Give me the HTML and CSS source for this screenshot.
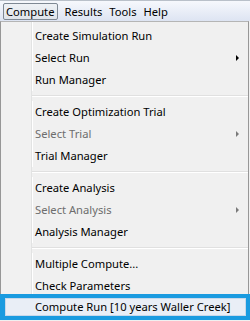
FILE: index.html
```html
<!DOCTYPE html>
<html>
<head>
    <title>Compute Menu</title>
    <link rel="stylesheet" href="styles.css">
</head>
<body>
    <div class="menubar">
        <span class="top-item open">Compute</span>
        <span class="top-item">Results</span>
        <span class="top-item">Tools</span>
        <span class="top-item">Help</span>
    </div>
    <div class="menu">
        <div class="item">Create Simulation Run</div>
        <div class="item sub">Select Run</div>
        <div class="item">Run Manager</div>
        <div class="sep"></div>
        <div class="item">Create Optimization Trial</div>
        <div class="item sub disabled">Select Trial</div>
        <div class="item">Trial Manager</div>
        <div class="sep"></div>
        <div class="item">Create Analysis</div>
        <div class="item sub disabled">Select Analysis</div>
        <div class="item">Analysis Manager</div>
        <div class="sep"></div>
        <div class="item">Multiple Compute...</div>
        <div class="item">Check Parameters</div>
        <div class="item framed"><span class="hover">Compute Run [10 years Waller Creek]</span></div>
    </div>
</body>
</html>
```

FILE: styles.css
```css
body {
    margin: 0;
    width: 250px;
    height: 321px;
    overflow: hidden;
    font-family: "Noto Sans", "Open Sans", sans-serif;
    font-size: 11.2px;
    color: #000;
    background: #f0f0f0;
}
.menubar {
    height: 20px;
    border-top: 1px solid #b9c0c9;
    background: linear-gradient(#f6f8fc, #dde4f2);
    display: flex;
    align-items: center;
    padding-left: 3px;
}
.top-item {
    padding: 0 2px 0 3px;
    line-height: 15px;
    border: 1px solid transparent;
}
.top-item.open {
    border-color: #7e8893;
    border-radius: 2px;
    background: linear-gradient(#eef1f5, #dfe4ea);
    padding: 0 3px 0 2px;
    margin-right: 2px;
}
.menu {
    border-left: 1px solid #979797;
    border-right: 1px solid #979797;
    border-top: 1px solid #b5b5b5;
    margin-right: 1px;
    padding-top: 3px;
    background: linear-gradient(to right, #f1f1f1 30px, #e2e3e3 30px, #e2e3e3 31px, #fff 31px, #fff 32px, #f0f0f0 32px);
}
.item {
    height: 22px;
    line-height: 22px;
    padding-left: 34px;
    position: relative;
}
.item.disabled {
    color: #6d6d6d;
}
.item.sub::after {
    content: "";
    position: absolute;
    right: 9px;
    top: 8px;
    border-left: 3px solid #000;
    border-top: 3px solid transparent;
    border-bottom: 3px solid transparent;
}
.item.sub.disabled::after {
    border-left-color: #7a7a7a;
}
.sep {
    height: 10px;
    margin-left: 31px;
    background: linear-gradient(#f0f0f0 4px, #e0e0e0 4px, #e0e0e0 5px, #fff 5px, #fff 6px, #f0f0f0 6px);
}
.item.framed {
    margin: -3px -2px 0 -1px;
    border: 4px solid #1a9be0;
    height: 18px;
    line-height: 18px;
    padding-left: 1px;
    background: #1a9be0;
}
.hover {
    display: block;
    height: 16px;
    line-height: 16px;
    border: 1px solid #c8d8ea;
    background: #e9eef6;
    padding-left: 29px;
}
```
